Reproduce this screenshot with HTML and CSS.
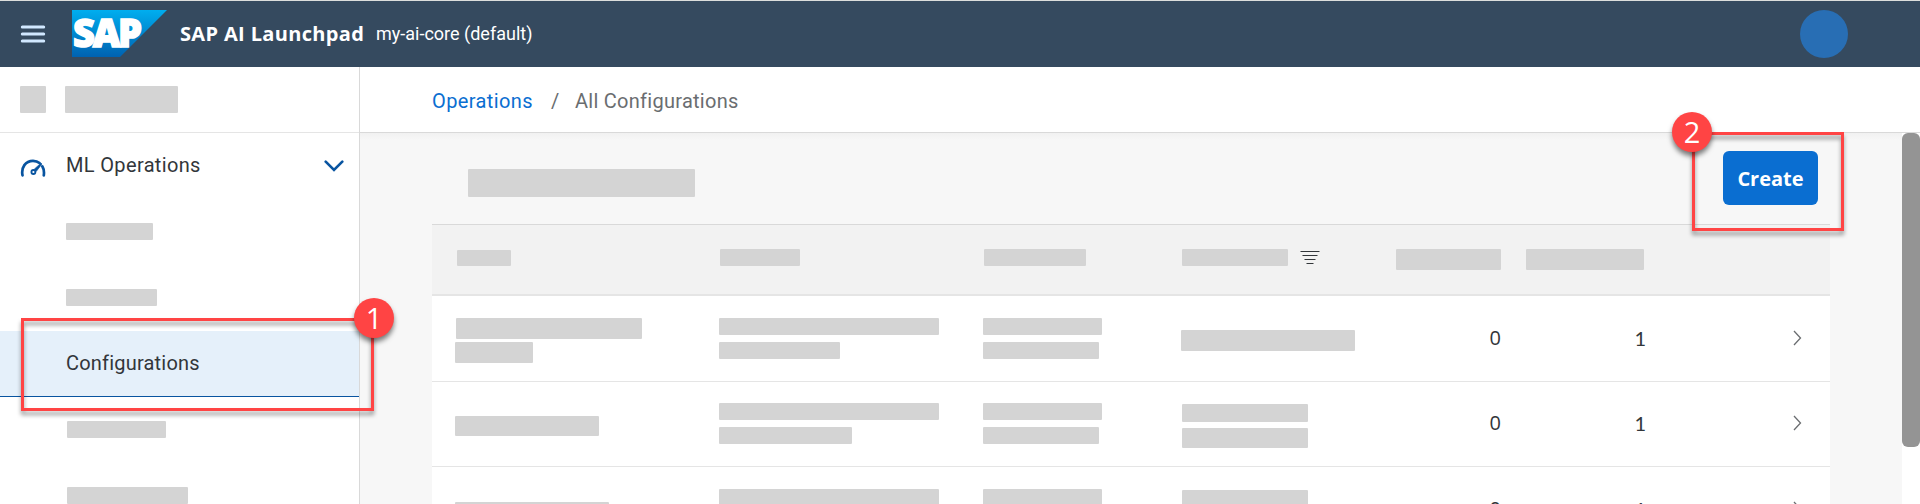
FILE: index.html
```html
<!DOCTYPE html>
<html lang="en">
<head>
<meta charset="utf-8">
<title>SAP AI Launchpad</title>
<link rel="stylesheet" href="styles.css">
</head>
<body>
<header class="shell">
  <svg class="menu" width="26" height="18" viewBox="0 0 26 18"><path d="M2.300 2h21.400M2.300 9h21.400M2.300 16h21.400" stroke="#d1e8ff" stroke-width="3" stroke-linecap="round"/></svg>
  <svg class="logo" width="95" height="47" viewBox="0 0 95 47">
    <defs><linearGradient id="sap" x1="0" y1="0" x2="0" y2="1"><stop offset="0" stop-color="#00aeef"/><stop offset="1" stop-color="#0062b1"/></linearGradient></defs>
    <path d="M0 0h95L48 47H0z" fill="url(#sap)"/>
    <text x="1" y="37" textLength="69" lengthAdjust="spacing" class="logo-text">SAP</text>
  </svg>
  <span class="product">SAP AI Launchpad</span>
  <span class="context">my-ai-core (default)</span>
  <span class="avatar"></span>
</header>
<div class="page">
  <nav class="side">
    <div class="side-top"><i class="ph ph-square"></i><i class="ph ph-name"></i></div>
    <div class="group">
      <svg class="gauge" width="26" height="20" viewBox="0 0 26 20" fill="none" stroke="#0854a0">
        <path d="M2.500 17.300C1 9.500 5.500 2.800 13 2.800c2.500 0 4.800.8 6.500 2.300M22.300 8.300c1.500 2.500 2 5.500 1.500 9" stroke-width="2.700" stroke-linecap="round"/>
        <circle cx="13.400" cy="14" r="2" stroke-width="1.800"/>
        <path d="M14.200 11.200L21 5l1 1-5.600 7.300z" fill="#0854a0" stroke-width=".6"/>
      </svg>
      <span class="group-label">ML Operations</span>
      <svg class="down" width="20" height="12" viewBox="0 0 20 12"><path d="M1.700 1.700L10 10l8.300-8.300" fill="none" stroke="#0854a0" stroke-width="2.600" stroke-linecap="round"/></svg>
    </div>
    <div class="item"><i class="ph w87"></i></div>
    <div class="item"><i class="ph w91"></i></div>
    <div class="item active">Configurations</div>
    <div class="item later"><i class="ph w99"></i></div>
    <div class="item later"><i class="ph w121"></i></div>
  </nav>
  <main class="main">
    <div class="crumbs"><a class="link">Operations</a><span class="slash">/</span><span class="here">All Configurations</span></div>
    <div class="body">
      <section class="content">
        <div class="toolbar"><i class="ph ph-title"></i><button class="create">Create</button></div>
        <div class="row head">
          <div><i class="ph h1"></i></div>
          <div><i class="ph h2"></i></div>
          <div><i class="ph h3"></i></div>
          <div class="filtered"><i class="ph h4"></i><svg width="20" height="13" viewBox="0 0 20 13"><path d="M.5 .5h19M2.500 4.500h15M4.500 8.500h11M6.500 12.500h7" stroke="#32363a"/></svg></div>
          <div><i class="ph h5"></i></div>
          <div><i class="ph h6"></i></div>
        </div>
        <div class="row first">
          <div class="name"><i class="ph n1"></i><i class="ph n2"></i></div>
          <div class="stack"><i class="ph w220"></i><i class="ph w121"></i></div>
          <div class="stack"><i class="ph w119"></i><i class="ph w116"></i></div>
          <div><i class="ph single"></i></div>
          <div class="num zero">0</div><div class="num">1</div>
          <svg class="next" width="9" height="16" viewBox="0 0 9 16"><path d="M1 1l6.500 7L1 15" fill="none" stroke="#6a6d70" stroke-width="1.300"/></svg>
        </div>
        <div class="row second">
          <div><i class="ph n3"></i></div>
          <div class="stack"><i class="ph w220"></i><i class="ph w133"></i></div>
          <div class="stack"><i class="ph w119"></i><i class="ph w116"></i></div>
          <div class="pair"><i class="ph p1"></i><i class="ph p2"></i></div>
          <div class="num zero">0</div><div class="num">1</div>
          <svg class="next" width="9" height="16" viewBox="0 0 9 16"><path d="M1 1l6.500 7L1 15" fill="none" stroke="#6a6d70" stroke-width="1.300"/></svg>
        </div>
        <div class="row third">
          <div><i class="ph n4"></i></div>
          <div class="stack"><i class="ph w220"></i><i class="ph w133"></i></div>
          <div class="stack"><i class="ph w119"></i><i class="ph w116"></i></div>
          <div class="pair"><i class="ph p1"></i><i class="ph p2"></i></div>
          <div class="num zero">0</div><div class="num">1</div>
          <svg class="next" width="9" height="16" viewBox="0 0 9 16"><path d="M1 1l6.500 7L1 15" fill="none" stroke="#6a6d70" stroke-width="1.300"/></svg>
        </div>
      </section>
      <div class="scroll"><div class="thumb"></div></div>
    </div>
  </main>
</div>
<div class="callout box-one"></div>
<div class="badge badge-one">1</div>
<div class="callout box-two"></div>
<div class="badge badge-two">2</div>
</body>
</html>
```
FILE: styles.css
```css
* { box-sizing: border-box; }
body {
  margin: 0;
  width: 1920px;
  height: 504px;
  overflow: hidden;
  position: relative;
  background: #fff;
  color: #32363a;
  font: 20px/24px Roboto, "Liberation Sans", sans-serif;
}
.shell {
  display: flex;
  align-items: center;
  height: 67px;
  border-top: 1px solid #dcdedc;
  background: #354a5f;
  color: #fff;
  padding: 0 72px 0 20px;
}
.menu { margin: 0 26px 0 0; }
.logo { margin: 0 13px 1px 0; }
.logo-text { font: 900 38px "Open Sans", sans-serif; fill: #fff; stroke: #fff; stroke-width: 1.5px; }
.product { font: 700 20px/24px "Open Sans", sans-serif; width: 196px; letter-spacing: .35px; white-space: nowrap; }
.context { font-size: 18px; white-space: nowrap; }
.avatar { margin-left: auto; width: 48px; height: 48px; border-radius: 50%; background: #286eb4; }

.ph { display: block; height: 17px; border-radius: 1px; background: #d4d4d4; }
.page { display: flex; height: 437px; }
.side { width: 360px; flex: none; border-right: 1px solid #d9d9d9; overflow: hidden; }
.side-top { display: flex; gap: 19px; height: 66px; padding: 19px 0 0 20px; border-bottom: 1px solid #e5e5e5; }
.ph-square { width: 26px; height: 27px; }
.ph-name { width: 113px; height: 27px; }
.group { display: flex; align-items: center; height: 66px; padding: 0 15px 0 20px; }
.gauge { margin-right: 20px; margin-top: 4px; }
.group-label { flex: 1; padding-bottom: 2px; letter-spacing: .35px; }
.item { display: flex; align-items: center; height: 66px; padding-left: 66px; padding-bottom: 1px; letter-spacing: .2px; }
.later { padding-left: 67px; }
.active { background: #e5f0fa; border-bottom: 1px solid #0854a0; padding-bottom: 2px; }
.w87 { width: 87px; }
.w91 { width: 91px; }
.w99 { width: 99px; }
.w116 { width: 116px; }
.w119 { width: 119px; }
.w121 { width: 121px; }
.w133 { width: 133px; }
.w220 { width: 220px; }

.main { flex: 1; display: flex; flex-direction: column; }
.crumbs { display: flex; height: 66px; padding: 22px 0 0 72px; border-bottom: 1px solid #d9d9d9; color: #6a6d70; letter-spacing: .27px; }
.link { width: 119px; color: #0a6ed1; letter-spacing: .4px; }
.slash { width: 24px; }
.body { display: flex; height: 371px; background: linear-gradient(#f1f1f1, #f7f7f7 7px); }
.content { width: 1398px; margin-left: 72px; overflow: hidden; }
.toolbar { display: flex; justify-content: space-between; height: 91px; padding: 0 12px 0 36px; }
.ph-title { width: 227px; height: 28px; margin-top: 36px; }
.create {
  width: 95px;
  height: 54px;
  margin-top: 18px;
  padding: 0;
  border: 0;
  border-radius: 6px;
  background: #0a6ed1;
  color: #fff;
  font: 700 20px "Open Sans", sans-serif;
}
.row {
  display: grid;
  grid-template-columns: 264px 264px 198px 214px 106px 145px 1fr;
  align-items: start;
  padding-left: 23px;
  background: #fff;
}
.head { height: 72px; padding-top: 24px; background: #f2f2f2; border-top: 1px solid #d9d9d9; border-bottom: 2px solid #e5e5e5; }
.h1 { width: 54px; height: 16px; margin: 1px 0 0 2px; }
.h2 { width: 80px; margin-left: 1px; }
.h3 { width: 102px; margin-left: 1px; }
.h4 { width: 106px; margin-left: 1px; }
.filtered { display: flex; gap: 12px; align-items: center; }
.h5 { width: 105px; height: 21px; margin-left: 1px; }
.h6 { width: 118px; height: 21px; margin-left: 25px; }
.first { height: 86px; padding-top: 22px; border-bottom: 1px solid #e5e5e5; }
.second { height: 85px; padding-top: 21px; border-bottom: 1px solid #e5e5e5; }
.third { height: 86px; padding-top: 22px; }
.stack { display: grid; gap: 7px; }
.name { display: grid; gap: 3px; }
.n1 { width: 186px; height: 21px; margin-left: 1px; }
.n2 { width: 78px; height: 21px; }
.n3 { width: 144px; height: 20px; margin-top: 13px; }
.n4 { width: 154px; height: 20px; margin-top: 13px; }
.single { width: 174px; height: 21px; margin-top: 12px; }
.pair { display: grid; gap: 6px; padding: 1px 0 0 1px; }
.p1 { width: 126px; height: 18px; }
.p2 { width: 126px; height: 20px; }
.num { text-align: right; padding-top: 8px; font: 20px/24px Lato, sans-serif; }
.zero { font-family: "Open Sans", sans-serif; }
.next { margin: 12px 0 0 147px; }
.scroll { margin-left: auto; width: 18px; background: #fff; }
.thumb { height: 314px; border-radius: 6px; background: #949494; }

.callout { position: absolute; border: 3px solid #ff4444; filter: drop-shadow(0 4px 2px rgba(0, 0, 0, .4)); }
.box-one { left: 21px; top: 318px; width: 353px; height: 93px; }
.box-two { left: 1692px; top: 132px; width: 152px; height: 99px; }
.badge {
  position: absolute;
  width: 40px;
  height: 40px;
  border-radius: 50%;
  background: #ff4444;
  color: #fff;
  font: 29px/40px "Open Sans", sans-serif;
  text-align: center;
  box-shadow: 0 4px 5px rgba(0, 0, 0, .5);
}
.badge-one { left: 354px; top: 298px; }
.badge-two { left: 1672px; top: 112px; }
```
